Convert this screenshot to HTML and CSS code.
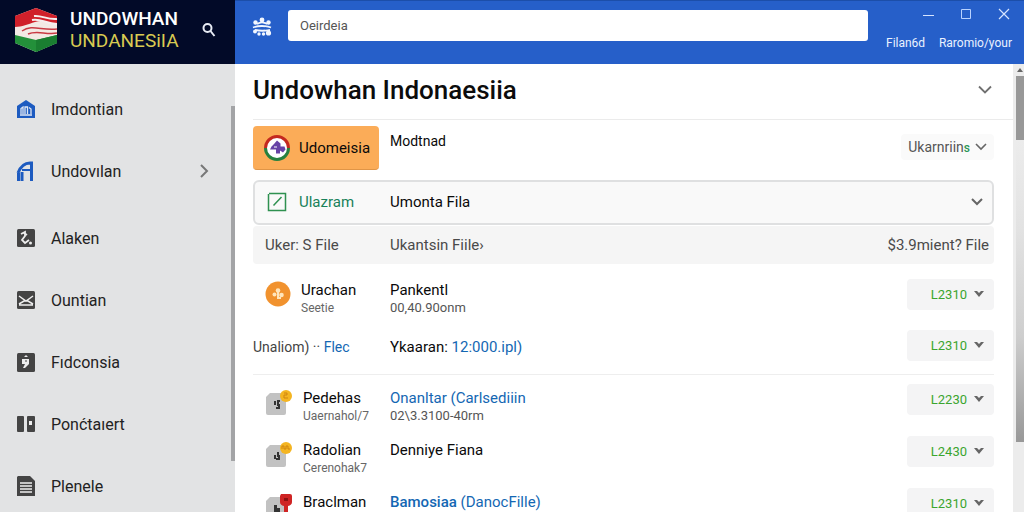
FILE: index.html
```html
<!DOCTYPE html>
<html lang="id">
<head>
<meta charset="utf-8">
<meta name="viewport" content="width=device-width, initial-scale=1">
<title>Undowhan Indonaesiia</title>
<link rel="stylesheet" href="styles.css">
</head>
<body>
<div class="app">
  <aside class="sidebar">
    <header class="brand">
      <svg class="brand-logo" width="44" height="46" viewBox="0 0 44 46" aria-hidden="true">
        <path d="M1 9 22 1l21 8v27l-21 9-21-9z" fill="#f3e9e4"/>
        <path d="M1 9 22 1l21 8v7c-9 1-13-4-22-1C14 17 8 20 1 20z" fill="#d0202a"/>
        <path d="M20 9c8-1 13 4 23 3M18 13c9-2 14 4 25 4" stroke="#f6eeee" stroke-width="2" fill="none"/>
        <path d="M8 24c10-7 20 0 35-2M14 27c9-4 18 1 29-1" stroke="#c93a44" stroke-width="1.500" fill="none"/>
        <path d="M1 28l21 5 21-5v8l-21 9-21-9z" fill="#23903a"/>
        <path d="M22 33v12l21-9v-8z" fill="#1a7e31"/>
      </svg>
      <div class="brand-name"><span>UNDOWHAN</span><span class="brand-accent">UNDANESiIA</span></div>
      <button class="icon-button" aria-label="Search">
        <svg width="16" height="16" viewBox="0 0 16 16" fill="none" stroke="#e8ecf5" stroke-width="2"><circle cx="6.500" cy="6" r="4"/><path d="M9.500 9l4 5"/></svg>
      </button>
    </header>
    <div class="sidebar-body">
      <nav class="nav">
        <ul class="nav-group">
          <li><a class="nav-link" href="#">
            <svg width="20" height="20" viewBox="0 0 20 20"><path d="M1 7 10 1l9 6v12H1z" fill="#1d5bc0"/><path d="M5 15V9.500L7 8v7M9 15V8h2.500v7M13 8.500l2 1.500v5M4 16h12" stroke="#dfe7f3" stroke-width="1.300" fill="none"/></svg>
            <span>Imdontian</span></a></li>
          <li><a class="nav-link" href="#">
            <svg width="20" height="20" viewBox="0 0 20 20" fill="none" stroke="#1d5bc0"><path d="M2.500 20v-8M6 20v-9" stroke-width="3"/><path d="M2 12C4 7 8 2 14 2h1.500v18" stroke-width="3"/><path d="M6 9h8" stroke-width="2"/></svg>
            <span>Undovılan</span>
            <svg class="nav-chevron" width="10" height="16" viewBox="0 0 10 16" fill="none" stroke="#777" stroke-width="2"><path d="M2 2l6 6-6 6"/></svg></a></li>
        </ul>
        <ul class="nav-group nav-group-tools">
          <li><a class="nav-link" href="#">
            <svg width="20" height="20" viewBox="0 0 20 20"><rect x="1" y="1" width="18" height="18" rx="1.500" fill="#444"/><path d="M5 6l4-2v4l-3 4 3 3 4-3M8 5l3 2" stroke="#eee" stroke-width="1.800" fill="none"/><circle cx="14.500" cy="15" r="1.500" fill="#eee"/></svg>
            <span>Alaken</span></a></li>
          <li><a class="nav-link" href="#">
            <svg width="20" height="20" viewBox="0 0 20 20"><rect x="1" y="1" width="18" height="18" rx="1.500" fill="#444"/><path d="M3 6l7 5 7-5M3 14l5-3h4l5 3M3 15h14" stroke="#eee" stroke-width="1.500" fill="none"/></svg>
            <span>Ountian</span></a></li>
          <li><a class="nav-link" href="#">
            <svg width="20" height="20" viewBox="0 0 20 20"><rect x="1" y="1" width="18" height="19" rx="1.500" fill="#444"/><path d="M8 5l2-2 2 2zM6 7h7v5l-4 4H7l2-4H6z" fill="#eee"/><path d="M9 9h2" stroke="#444"/></svg>
            <span>Fıdconsia</span></a></li>
          <li><a class="nav-link" href="#">
            <svg width="20" height="20" viewBox="0 0 20 20"><rect x="1" y="2" width="7" height="16" rx="1" fill="#444"/><rect x="11" y="2" width="8" height="16" rx="1" fill="#444"/><rect x="13" y="7" width="3" height="4" fill="#eee"/></svg>
            <span>Ponćtaıert</span></a></li>
          <li><a class="nav-link" href="#">
            <svg width="20" height="22" viewBox="0 0 20 22"><path d="M2 1h12l5 5v15H1V2z" fill="#444"/><path d="M4 8h12M4 11h12M4 14h12M4 17h12" stroke="#eee" stroke-width="1.300"/></svg>
            <span>Plenele</span></a></li>
        </ul>
      </nav>
      <div class="sidebar-scroll"></div>
    </div>
  </aside>

  <div class="main">
    <header class="topbar">
      <button class="icon-button" aria-label="Apps">
        <svg width="20" height="20" viewBox="0 0 20 20" fill="#f2f7ff"><circle cx="10" cy="3" r="2.400"/><circle cx="3.500" cy="5.500" r="2.200"/><circle cx="16.500" cy="5.500" r="2.200"/><circle cx="3" cy="14.500" r="2"/><circle cx="16.500" cy="16" r="2.600"/><circle cx="7" cy="17" r="1.700"/><circle cx="11.500" cy="17" r="1.700"/><path d="M1 10.500c5-2 13-2 18 0M3 13c5 1 10 1 15 0M5 7c3-2 7-2 10 0" stroke="#f2f7ff" stroke-width="1.800" fill="none"/></svg>
      </button>
      <input class="search" type="search" value="Oeirdeia" aria-label="Search files">
      <div class="top-actions">
        <div class="window-controls">
          <button class="icon-button" aria-label="Minimise"><svg width="14" height="14" viewBox="0 0 14 14" stroke="#d5e4ff"><path d="M1 8.500h11"/></svg></button>
          <button class="icon-button" aria-label="Maximise"><svg width="14" height="14" viewBox="0 0 14 14" fill="none" stroke="#b9d2ff"><path d="M1.500 2.500h9v9h-9z"/></svg></button>
          <button class="icon-button" aria-label="Close"><svg width="14" height="14" viewBox="0 0 14 14" stroke="#d5e4ff" stroke-width="1.200"><path d="M1 2l10 10M11 2 1 12"/></svg></button>
        </div>
        <nav class="top-links"><a href="#">Filan6d</a><a href="#">Raromio/your</a></nav>
      </div>
    </header>

    <div class="viewport">
      <main class="content">
        <div class="title-row">
          <h1>Undowhan Indonaesiia</h1>
          <button class="icon-button" aria-label="Collapse"><svg width="18" height="12" viewBox="0 0 18 12" fill="none" stroke="#707070" stroke-width="1.800"><path d="M3 2.500l6 6 6-6"/></svg></button>
        </div>
        <div class="tabs">
          <button class="tab">
            <svg width="28" height="28" viewBox="0 0 28 28"><circle cx="14" cy="14" r="11" fill="#fff"/><path d="M2.500 14a11.500 11.500 0 0 1 23 0" fill="none" stroke="#c4291f" stroke-width="3"/><path d="M2.500 14a11.500 11.500 0 0 0 23 0" fill="none" stroke="#27813f" stroke-width="3"/><path d="M14 6.500l3.500 3v3h4l1 3-2.500 3-3-2v3h-4v-4H7l1.500-3L11 10z" fill="#6743a6"/><path d="M11 13h3" stroke="#fff"/></svg>
            <span>Udomeisia</span>
          </button>
          <span class="tab-note">Modtnad</span>
          <button class="filter"><span>Ukarnriin<b>s</b></span>
            <svg width="14" height="10" viewBox="0 0 14 10" fill="none" stroke="#666" stroke-width="1.600"><path d="M2 2l5 5 5-5"/></svg></button>
        </div>
        <button class="picker">
          <svg width="20" height="20" viewBox="0 0 20 20" fill="none" stroke="#2f9150" stroke-width="1.500"><path d="M2 1.500h16.500v17H1.500V2M6.500 13.500l8-8.500"/></svg>
          <span class="picker-kind">Ulazram</span>
          <span class="picker-name">Umonta Fila</span>
          <svg width="14" height="10" viewBox="0 0 14 10" fill="none" stroke="#666" stroke-width="2"><path d="M2 2l5 5 5-5"/></svg>
        </button>
        <table class="files">
          <thead><tr><th class="col-owner">Uker: S File</th><th>Ukantsin Fiile›</th><th class="col-size">$3.9mient? File</th></tr></thead>
          <tbody>
            <tr class="row-lead">
              <td><div class="owner"><svg width="26" height="26" viewBox="0 0 26 26"><circle cx="13" cy="13" r="12.500" fill="#f1922e"/><circle cx="13" cy="9.500" r="2.300" fill="#ffe6bd"/><circle cx="9.500" cy="13.500" r="2" fill="#ffe6bd"/><circle cx="16.500" cy="14" r="2.300" fill="#ffe6bd"/><path d="M13 9v8h3" stroke="#ffe6bd" stroke-width="2" fill="none"/></svg>
                <div class="lines"><span class="name">Urachan</span><span class="meta">Seetie</span></div></div></td>
              <td><div class="lines"><span class="name">Pankentl</span><span class="stamp">00,40.90onm</span></div></td>
              <td class="size"><button class="amount">L2310<svg width="10" height="6" viewBox="0 0 10 6"><path d="M0 0h3l2 2 2-2h3L5 6z" fill="#666"/></svg></button></td>
            </tr>
            <tr class="row-single">
              <td><span class="plain">Unaliom) ·· <a href="#">Flec</a></span></td>
              <td><span class="name">Ykaaran: <a href="#">12:000.ipl)</a></span></td>
              <td class="size"><button class="amount">L2310<svg width="10" height="6" viewBox="0 0 10 6"><path d="M0 0h3l2 2 2-2h3L5 6z" fill="#666"/></svg></button></td>
            </tr>
            <tr>
              <td><div class="owner"><svg width="28" height="28" viewBox="0 0 28 28"><path d="M5 4h16v20q0 2-2 2H3q-2 0-2-2V8z" fill="#c2c2c2"/><path d="M9 12h2v4H9zM12 11h3v2h-1v2h1v5h-4v-2h2v-1h-1z" fill="#333"/><circle cx="21" cy="7" r="6" fill="#f4b522"/><path d="M19 4h3v2h-3v3h4" stroke="#cf8510" fill="none"/></svg>
                <div class="lines"><span class="name">Pedehas</span><span class="meta">Uaernahol/7</span></div></div></td>
              <td><div class="lines"><a class="name" href="#">Onanltar (Carlsediiin</a><span class="stamp">02\3.3100-40rm</span></div></td>
              <td class="size"><button class="amount">L2230<svg width="10" height="6" viewBox="0 0 10 6"><path d="M0 0h3l2 2 2-2h3L5 6z" fill="#666"/></svg></button></td>
            </tr>
            <tr>
              <td><div class="owner"><svg width="28" height="28" viewBox="0 0 28 28"><path d="M5 4h16v20q0 2-2 2H3q-2 0-2-2V8z" fill="#c2c2c2"/><path d="M9 14h2v4H9zM12 11h2v3h1v5h-4v-2h2v-1h-1z" fill="#333"/><circle cx="21" cy="7" r="6" fill="#f4b522"/><path d="M17 8V5h2v3h2V5h2v3h2" stroke="#cf8510" fill="none"/></svg>
                <div class="lines"><span class="name">Radolian</span><span class="meta">Cerenohak7</span></div></div></td>
              <td><div class="lines"><span class="name">Denniye Fiana</span></div></td>
              <td class="size"><button class="amount">L2430<svg width="10" height="6" viewBox="0 0 10 6"><path d="M0 0h3l2 2 2-2h3L5 6z" fill="#666"/></svg></button></td>
            </tr>
            <tr>
              <td><div class="owner"><svg width="28" height="28" viewBox="0 0 28 28"><path d="M5 4h16v24H1V8z" fill="#c2c2c2"/><path d="M9 12h3v3h3v9h-5v-3h2v-2H9z" fill="#333"/><path d="M16 1h9q2 0 2 2v6q0 3-4 4v7h-4v-7q-4-1-4-4V3z" fill="#cf2424"/><path d="M19 5h4v3h-4z" fill="#8c1212"/></svg>
                <div class="lines"><span class="name">Braclman</span></div></div></td>
              <td><div class="lines"><a class="name" href="#"><span class="strong">Bamosiaa</span> (DanocFille)</a></div></td>
              <td class="size"><button class="amount">L2310<svg width="10" height="6" viewBox="0 0 10 6"><path d="M0 0h3l2 2 2-2h3L5 6z" fill="#666"/></svg></button></td>
            </tr>
          </tbody>
        </table>
      </main>
      <div class="scrollbar"><svg width="8" height="12" viewBox="0 0 8 12"><path d="M4 4l3 4H1z" fill="#666"/></svg><div class="thumb"></div><div class="thumb-tail"></div></div>
    </div>
  </div>
</div>
</body>
</html>
```

FILE: styles.css
```css
* { box-sizing: border-box; }

body {
  margin: 0;
  font-family: Roboto, "Liberation Sans", sans-serif;
  font-size: 15px;
  color: #0a0a0a;
  background: #fff;
}

button, input { font: inherit; color: inherit; }
button { border: 0; padding: 0; background: none; cursor: pointer; }
a { color: #1467b3; text-decoration: none; }
ul { list-style: none; margin: 0; padding: 0; }
svg { display: block; flex: none; }

.app { display: flex; height: 100vh; overflow: hidden; }
.icon-button { display: flex; align-items: center; justify-content: center; }

/* Sidebar */
.sidebar {
  display: flex;
  flex-direction: column;
  flex: none;
  width: 235px;
  background: #e2e3e4;
}
.brand {
  display: flex;
  align-items: center;
  flex: none;
  height: 64px;
  padding: 0 18px 4px 14px;
  background: #020a28;
}
.brand-name {
  display: flex;
  flex-direction: column;
  flex: 1;
  margin-left: 12px;
  font-size: 19px;
  font-weight: 500;
  line-height: 22px;
  color: #fff;
}
.brand-accent { font-weight: 400; color: #d9cb52; }
.sidebar-body { display: flex; flex: 1; }
.nav { flex: 1; padding-top: 14px; }
.nav-group-tools { margin-top: 5px; }
.nav-link {
  display: flex;
  align-items: center;
  gap: 15px;
  height: 62px;
  padding: 0 22px 0 16px;
  font-size: 16px;
  color: #222;
}
.nav-chevron { margin-left: auto; }
.sidebar-scroll { width: 4px; margin: 42px 0 56px; background: #a3a4a6; }

/* Top bar */
.main { display: flex; flex-direction: column; flex: 1; min-width: 0; }
.topbar {
  display: flex;
  align-items: flex-start;
  flex: none;
  height: 64px;
  padding: 9px 12px 0 17px;
  background: #265fc9;
  border-top: 1px solid #1c4ea9;
}
.topbar > .icon-button { height: 34px; }
.search {
  flex: 1;
  min-width: 0;
  height: 31px;
  margin-left: 16px;
  padding: 0 12px;
  border: 0;
  border-radius: 3px;
  background: #fff;
  font-size: 13px;
  color: #555;
}
.top-actions { flex: none; width: 144px; margin-top: -3px; }
.window-controls { display: flex; justify-content: flex-end; gap: 24px; }
.top-links {
  display: flex;
  justify-content: space-between;
  margin: 14px 0 0 18px;
  font-size: 12px;
  line-height: 16px;
}
.top-links a { color: #eaf2ff; }

/* Content */
.viewport { display: flex; flex: 1; min-height: 0; }
.content { flex: 1; min-width: 0; padding: 0 19px 0 18px; }
.title-row {
  display: flex;
  align-items: center;
  justify-content: space-between;
  height: 56px;
  margin-right: -19px;
  padding: 0 19px 4px 0;
  border-bottom: 1px solid #ebebeb;
}
h1 { margin: 0; font-size: 26px; font-weight: 500; line-height: 32px; color: #0c0c0c; }
.tabs { display: flex; align-items: flex-start; margin: 6px 0 10px; }
.tab {
  display: flex;
  align-items: center;
  gap: 8px;
  width: 126px;
  height: 44px;
  padding: 0 10px;
  border-radius: 4px;
  background: #fbac58;
  border-bottom: 1px solid #e09547;
  font-size: 15px;
}
.tab-note { flex: 1; margin: 6px 0 0 11px; font-size: 14px; line-height: 18px; }
.filter {
  display: flex;
  align-items: center;
  gap: 4px;
  height: 26px;
  margin-top: 8px;
  padding: 0 6px 0 7px;
  border-radius: 4px;
  background: #fafafa;
  font-size: 14px;
  color: #555;
}
.filter b { font-size: 12px; font-weight: 500; color: #2c9656; }
.picker {
  display: flex;
  align-items: center;
  width: 100%;
  height: 45px;
  padding: 0 8px 2px 12px;
  border: 2px solid #dfe0e1;
  border-radius: 6px;
  background: #f9f9f9;
  text-align: left;
}
.picker-kind { width: 91px; margin-left: 12px; color: #18815a; }
.picker-name { flex: 1; }

.files { width: 100%; margin-top: 1px; border-spacing: 0; table-layout: fixed; }
.files th {
  height: 38px;
  padding: 0;
  background: #f5f5f5;
  font-weight: 400;
  text-align: left;
  color: #4a4a4a;
}
.files .col-owner { width: 137px; padding-left: 12px; border-radius: 4px 0 0 4px; }
.files .col-size { width: 130px; padding-right: 5px; border-radius: 0 4px 4px 0; text-align: right; }
.files td { height: 52px; padding: 14px 0 0; vertical-align: top; }
.files .row-lead td { height: 56px; padding-top: 17px; }
.files .row-single td { height: 55px; padding: 0; vertical-align: middle; border-bottom: 1px solid #eeeeee; }
.files .size { padding: 0 0 4px; vertical-align: middle; text-align: right; }
.files .row-lead .size { padding: 4px 0 0; }
.files .row-single .size { padding-bottom: 4px; }
.owner { display: flex; gap: 10px; padding-left: 12px; }
.lines { display: flex; flex-direction: column; }
.name { font-size: 15px; line-height: 18px; }
.strong { font-weight: 500; }
.meta { font-size: 12px; line-height: 18px; color: #666; }
.stamp { font-size: 13px; line-height: 18px; color: #555; }
.plain { font-size: 14px; color: #444; }
.amount {
  display: inline-flex;
  align-items: center;
  justify-content: flex-end;
  gap: 7px;
  width: 87px;
  height: 31px;
  padding-right: 10px;
  border-radius: 4px;
  background: #f4f4f5;
  font-size: 13px;
  color: #3ba52e;
  vertical-align: middle;
}

.scrollbar { display: flex; flex-direction: column; align-items: flex-end; flex: none; width: 11px; background: #ececec; }
.thumb { width: 8px; flex: 64 0 0; background: #989898; }
.thumb-tail { width: 8px; flex: 301 0 0; margin-bottom: 70px; background: linear-gradient(#ececec, #e2e2e2 30%, #cecece 65%, #989898); }
```
